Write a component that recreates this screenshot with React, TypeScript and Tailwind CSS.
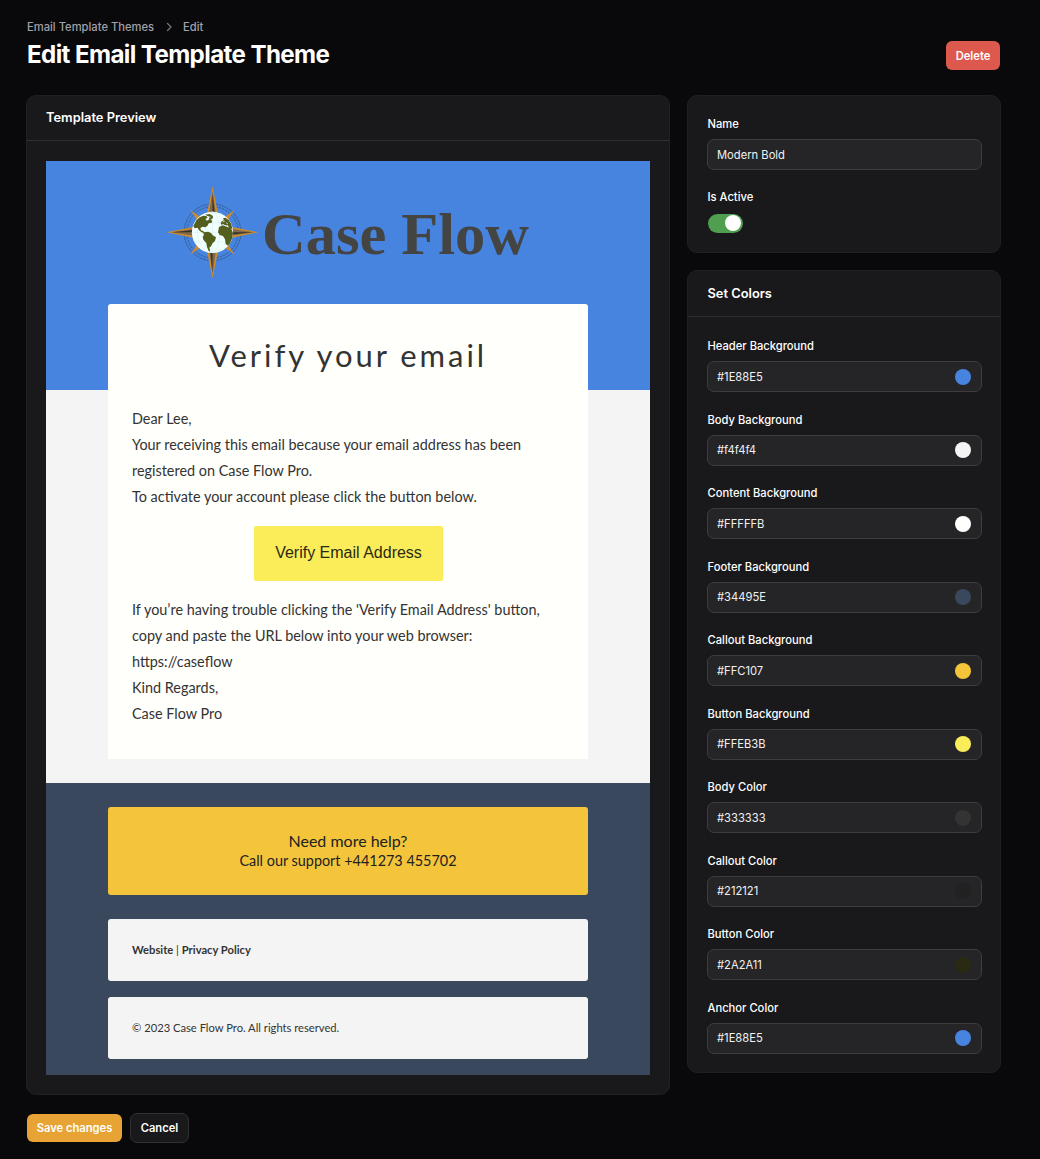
import type { ReactNode } from "react";

const colorFields = [
  { label: "Header Background", value: "#1E88E5", swatch: "#4784e0" },
  { label: "Body Background", value: "#f4f4f4", swatch: "#f4f4f4" },
  { label: "Content Background", value: "#FFFFFB", swatch: "#fffffd" },
  { label: "Footer Background", value: "#34495E", swatch: "#3a485d" },
  { label: "Callout Background", value: "#FFC107", swatch: "#f4c53a" },
  { label: "Button Background", value: "#FFEB3B", swatch: "#fbec5a" },
  { label: "Body Color", value: "#333333", swatch: "#333333" },
  { label: "Callout Color", value: "#212121", swatch: "#212121" },
  { label: "Button Color", value: "#2A2A11", swatch: "#2a2a14" },
  { label: "Anchor Color", value: "#1E88E5", swatch: "#4784e0" },
];

function Panel({ title, className, children }: { title?: ReactNode; className: string; children: ReactNode }) {
  return (
    <section className={`flex flex-col rounded-[10px] border border-[#202022] bg-[#19191b] ${className}`}>
      {title}
      {children}
    </section>
  );
}

function Field({ label, value, swatch }: { label: string; value: string; swatch?: string }) {
  return (
    <label className="flex flex-col">
      <span className="h-[16px] pl-[0.5px] text-[11.2px] leading-[16px] font-medium text-white">{label}</span>
      <span className="mt-[7px] flex h-[31px] items-center justify-between rounded-[7px] border border-[#3d3d40] bg-[#252527] pr-[10px] pl-[9px]">
        <span className="text-[11.2px] leading-[16px] text-[#f1f1f2]">{value}</span>
        {swatch && <span className="size-4 rounded-full" style={{ backgroundColor: swatch }} />}
      </span>
    </label>
  );
}

function Logo() {
  return (
    <svg viewBox="46 161 604 143" className="h-[143px] w-[604px]">
      <g transform="translate(150 170) scale(0.33333)">
        <g fill="none" stroke="#2f5688">
          <circle cx="187.5" cy="187" r="85" strokeWidth="2.5" strokeDasharray="9 2" />
          <circle cx="187.5" cy="187" r="77" strokeWidth="2.5" strokeDasharray="7 3" />
        </g>
        <g fill="#c98a35">
          <path d="M120 119L157 145L146 157Z" />
          <path d="M255 119L218 145L229 157Z" />
          <path d="M120 255L157 229L146 217Z" />
          <path d="M255 255L218 229L229 217Z" />
        </g>
        {[0, 90, 180, 270].map((angle) => (
          <g key={angle} transform={`rotate(${angle} 187.5 187)`}>
            <path d="M187.5 49L206 140L187.5 187L169 140Z" fill="#cf8d2b" />
            <path d="M187.5 62L199 140L187.5 187L176 140Z" fill="#806848" />
            <path d="M187.5 66L195 140V187H187.5Z" fill="#38322c" />
          </g>
        ))}
        <circle cx="187.5" cy="187" r="62" fill="#f1ffff" />
        <g fill="none" stroke="#d5e8e8" strokeWidth="1.3">
          <ellipse cx="187.5" cy="187" rx="22" ry="61" />
          <ellipse cx="187.5" cy="187" rx="45" ry="61" />
          <path d="M187.5 125V249M126 187H249M133 158H242M133 216H242" />
        </g>
        <g fill="#545f1d">
          <path d="M130 168L139 151L149 142L160 137L169 138L173 143L166 147L171 152L179 147L187 153L184 159L176 160L172 168L165 172L158 170L151 174L153 181L161 184L162 189L155 187L147 181L143 173L134 175Z" />
          <path d="M165 134L179 132L188 137L189 144L182 150L176 145L179 141Z" />
          <path d="M161 187L175 185L184 190L188 196L198 202L195 213L188 219L183 229L178 233L181 244L176 243L171 231L169 219L160 209L158 200L162 195L159 188Z" />
          <path d="M212 159L216 153L222 151L219 145L226 143L236 150L244 163L247 177L238 174L233 166L225 166L219 162L214 165Z" />
          <path d="M207 171L218 166L226 169L233 171L243 175L249 188L247 204L240 220L234 227L227 222L225 208L219 198L209 195L204 187Z" />
        </g>
        <path d="M218 156L225 153M228 158L234 162M172 140L182 142" fill="none" stroke="#f1ffff" strokeWidth="2" />
      </g>
      <text x="262" y="253.5" textLength="267" lengthAdjust="spacingAndGlyphs" fill="#444443" className="font-['Liberation_Serif',serif] text-[60px] font-bold">
        Case Flow
      </text>
    </svg>
  );
}

function EmailPreview() {
  return (
    <div className="mx-[19px] mt-[20px] w-[604px] bg-[#f4f4f4] font-[Lato,sans-serif] text-[#333333]">
      <div className="h-[229px] bg-[#4784e0]">
        <Logo />
      </div>
      <div className="mx-auto -mt-[86px] flex h-[455px] w-[480px] flex-col rounded-t-[3px] bg-[#fffffb] px-6">
        <h3 className="mt-[31px] text-center text-[31px] leading-[40px] tracking-[2.95px]">Verify your email</h3>
        <p className="mt-[31px] text-[14.42px] leading-[26px]">
          Dear Lee,
          <br />
          Your receiving this email because your email address has been
          <br />
          registered on Case Flow Pro.
          <br />
          To activate your account please click the button below.
        </p>
        <div className="mt-[16px] ml-[122px] flex h-[55px] w-[189px] items-center justify-center rounded-[2px] bg-[#fbec5a] pb-[2px] font-['Liberation_Sans',sans-serif] text-[16px] text-[#2a2a11]">
          Verify Email Address
        </div>
        <p className="mt-[16px] text-[14.42px] leading-[26px] whitespace-nowrap">
          If you’re having trouble clicking the 'Verify Email Address' button,
          <br />
          copy and paste the URL below into your web browser:
          <br />
          https://caseflow
          <br />
          Kind Regards,
          <br />
          Case Flow Pro
        </p>
      </div>
      <div className="mt-6 flex h-[292px] flex-col items-center bg-[#3a485d] pt-6">
        <div className="flex h-[88px] w-[480px] flex-col items-center justify-center rounded-[3px] bg-[#f4c53a] pb-[2px] text-[#212121]">
          <div className="text-[16px] leading-[20px]">Need more help?</div>
          <div className="text-[14.42px] leading-[19px]">Call our support +441273 455702</div>
        </div>
        <div className="mt-6 flex h-[62px] w-[480px] items-center rounded-[3px] bg-[#f4f4f4] px-6 text-[11.2px]">
          <span className="font-bold">Website</span>
          <span className="whitespace-pre"> | </span>
          <span className="font-bold">Privacy Policy</span>
        </div>
        <div className="mt-4 flex h-[62px] w-[480px] items-center rounded-[3px] bg-[#f4f4f4] px-6 text-[11.2px]">
          © 2023 Case Flow Pro. All rights reserved.
        </div>
      </div>
    </div>
  );
}

export default function App() {
  return (
    <main className="flex h-[1159px] w-[1040px] flex-col bg-[#09090b] pr-[39px] pl-[26px] font-[Inter,sans-serif]">
      <header className="flex h-[95px] shrink-0 justify-between pr-px pl-px">
        <div>
          <nav className="mt-[19px] flex h-4 items-center text-[11.2px] font-medium text-[#a0a0a8]">
            <span>Email Template Themes</span>
            <svg viewBox="0 0 8 10" className="mr-[9px] ml-[10px] h-[10px] w-[10px]" fill="none" stroke="#74747c" strokeWidth="1.3" strokeLinecap="round" strokeLinejoin="round">
              <path d="M2.5 1.5L6 5L2.5 8.5" />
            </svg>
            <span>Edit</span>
          </nav>
          <h1 className="mt-[4px] text-[24.15px] leading-[31px] font-bold tracking-[-0.61px] text-white">Edit Email Template Theme</h1>
        </div>
        <button className="mt-[41px] h-[29px] w-[54px] rounded-[6px] bg-[#dd594d] pt-px text-[11.2px] font-semibold text-white">Delete</button>
      </header>
      <div className="flex items-start gap-[17px]">
        <Panel
          className="h-[1000px] w-[644px]"
          title={
            <h2 className="flex h-[45px] shrink-0 items-center border-b border-[#2f2f31] px-[19px] text-[12.87px] font-semibold text-white">
              Template Preview
            </h2>
          }
        >
          <EmailPreview />
        </Panel>
        <div className="flex w-[314px] flex-col gap-[17px]">
          <Panel className="h-[158px] pt-[20px] pr-[18px] pl-[19px]">
            <Field label="Name" value="Modern Bold" />
            <div className="mt-[19px] pl-[0.5px] text-[11.2px] leading-[16px] font-medium text-white">Is Active</div>
            <div className="mt-[9px] ml-px flex h-[19px] w-[35px] items-center justify-end rounded-full bg-[#509f51] pr-[2px] pb-px">
              <span className="size-4 rounded-full bg-white" />
            </div>
          </Panel>
          <Panel
            className="h-[803px]"
            title={
              <h2 className="flex h-[46px] shrink-0 items-center border-b border-[#2f2f31] px-[19.5px] pt-px text-[12.87px] font-semibold text-white">
                Set Colors
              </h2>
            }
          >
            <div className="flex flex-col gap-[19.55px] pt-[21px] pr-[18px] pl-[19px]">
              {colorFields.map((field) => (
                <Field key={field.label} {...field} />
              ))}
            </div>
          </Panel>
        </div>
      </div>
      <footer className="mt-[18px] ml-px flex items-center gap-2">
        <button className="h-[28px] w-[95px] rounded-[6px] bg-[#e7a435] pt-px text-[11.2px] font-semibold text-white">Save changes</button>
        <button className="h-[30px] w-[59px] rounded-[7px] border border-[#303033] bg-[#19191b] pt-px text-[11.2px] font-semibold text-white">Cancel</button>
      </footer>
    </main>
  );
}
